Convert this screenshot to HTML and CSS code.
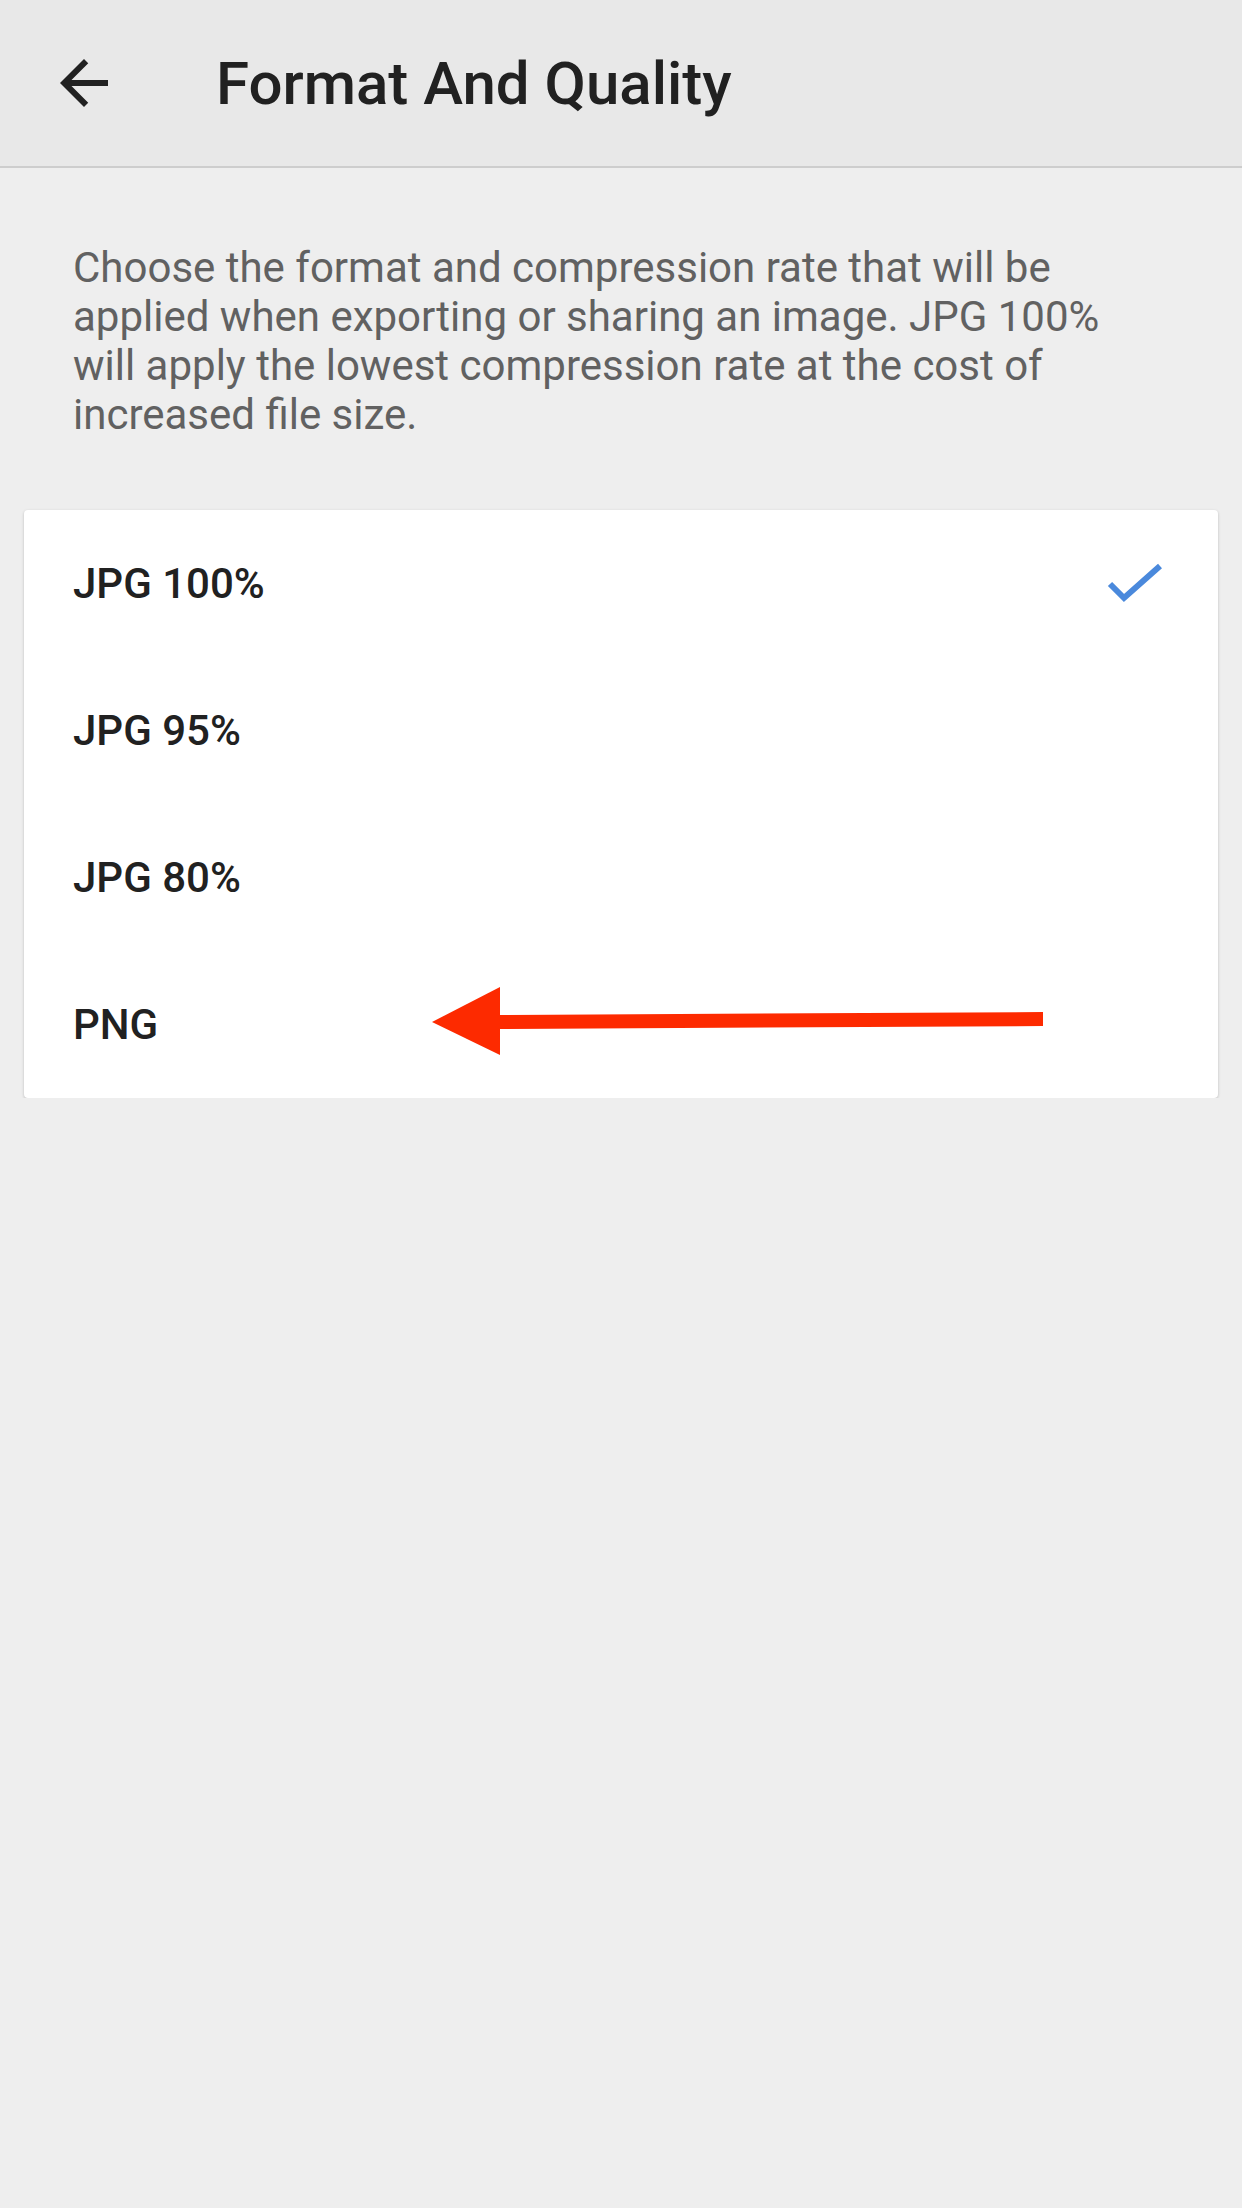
FILE: index.html
```html
<!DOCTYPE html>
<html lang="en">
<head>
  <meta charset="UTF-8" />
  <meta name="viewport" content="width=device-width, initial-scale=1.0" />
  <title>Format And Quality</title>
  <link rel="stylesheet" href="styles.css">
</head>
<body>
  <header class="toolbar">
    <button class="back-button" aria-label="Back">
      <svg viewBox="0 0 24 24" width="72" height="72">
        <path d="M20 11H7.83l5.59-5.59L12 4l-8 8 8 8 1.41-1.41L7.83 13H20v-2z" fill="#212121"/>
      </svg>
    </button>
    <h1>Format And Quality</h1>
  </header>

  <p class="intro">Choose the format and compression rate that will be applied when exporting or sharing an image. JPG 100% will apply the lowest compression rate at the cost of increased file size.</p>

  <div class="options">
    <div class="option selected">
      <span>JPG 100%</span>
      <svg class="check" viewBox="0 0 60 44" width="60" height="44">
        <polyline points="4,22 18,36 54,4" fill="none" stroke="#4a89dc" stroke-width="6"/>
      </svg>
    </div>
    <div class="option"><span>JPG 95%</span></div>
    <div class="option"><span>JPG 80%</span></div>
    <div class="option">
      <span>PNG</span>
      <!-- red annotation arrow drawn over the row -->
      <svg class="pointer" viewBox="0 0 620 80" width="620" height="80">
        <polygon points="0,41 68,6 68,74" fill="#fd2a00"/>
        <polygon points="66,34 611,31 611,45 66,48" fill="#fd2a00"/>
      </svg>
    </div>
  </div>
</body>
</html>
```

FILE: styles.css
```css
body {
  margin: 0;
  font-family: Roboto, "Noto Sans", sans-serif;
  background: #eeeeee;
  color: #212121;
}

.toolbar {
  display: flex;
  align-items: center;
  height: 168px;
  background: #e8e8e8;
  border-bottom: 2px solid #cdcdcd;
  box-sizing: border-box;
}

.back-button {
  display: flex;
  align-items: center;
  justify-content: center;
  margin-left: 48px;
  padding: 0;
  width: 72px;
  height: 72px;
  border: none;
  background: none;
}

.toolbar h1 {
  margin: 0 0 0 96px;
  font-size: 60px;
  font-weight: 500;
  color: #212121;
}

.intro {
  margin: 0;
  padding: 75px 110px 71px 73px;
  font-size: 42px;
  line-height: 49px;
  color: #616161;
}

.options {
  margin: 0 24px;
  background: #fff;
  border-radius: 4px;
  box-shadow: 0 1px 3px rgba(0, 0, 0, 0.22);
}

.option {
  position: relative;
  display: flex;
  align-items: center;
  justify-content: space-between;
  height: 147px;
  padding: 0 52px 0 49px;
  font-size: 42px;
  font-weight: 500;
  color: #212121;
}

.check {
  display: block;
}

.pointer {
  position: absolute;
  left: 408px;
  top: 30px;
}
```
